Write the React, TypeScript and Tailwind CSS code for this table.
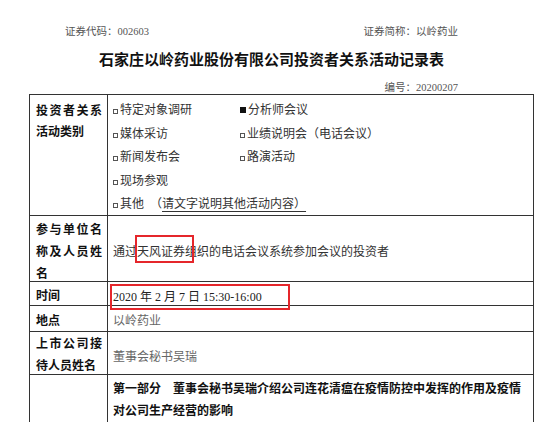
import React from "react";

const serif = { fontFamily: '"Liberation Serif", "Noto Sans CJK SC", serif' };

function Box({ filled = false }: { filled?: boolean }) {
  return filled ? (
    <span className="inline-block w-[6px] h-[6px] bg-[#111] mr-[2px] align-[1px]" />
  ) : (
    <span className="inline-block w-[5px] h-[5px] border border-[#555] mr-[2px] align-[0px]" />
  );
}

export default function App() {
  return (
    <div className="w-[550px] h-[422px] overflow-hidden bg-white relative">
      <div
        className="flex justify-between w-[458px] pl-[65px] pt-[25px] text-[10.5px] leading-[14px] text-[#555]"
        style={serif}
      >
        <span>证券代码：002603</span>
        <span>证券简称：以岭药业</span>
      </div>
      <div className="pl-[99px] pt-[10px] text-[15px] leading-[20px] font-bold text-[#111] font-['Noto_Sans_CJK_SC',sans-serif]">
        石家庄以岭药业股份有限公司投资者关系活动记录表
      </div>
      <div
        className="flex justify-end w-[458px] pt-[12px] text-[10.5px] leading-[14px] text-[#555]"
        style={serif}
      >
        <span>编号：20200207</span>
      </div>
      <div className="ml-[29px] mt-[-1px] w-[505px] border border-[#333] border-b-0">
        {/* Row 1 */}
        <div className="flex h-[121px] border-b border-[#333]">
          <div className="w-[78px] border-r border-[#333] pl-[6px] pt-[4px] text-[12px] leading-[21px] font-bold text-[#111] font-['Noto_Sans_CJK_SC',sans-serif]">
            <div className="tracking-[1.5px]">投资者关系</div>
            <div>活动类别</div>
          </div>
          <div
            className="flex-1 pl-[5px] pt-[4px] text-[12px] leading-[23.5px] text-[#333]"
            style={serif}
          >
            <div className="grid grid-cols-[127px_1fr]">
              <div><Box />特定对象调研</div>
              <div><Box filled />分析师会议</div>
              <div><Box />媒体采访</div>
              <div><Box />业绩说明会（电话会议）</div>
              <div><Box />新闻发布会</div>
              <div><Box />路演活动</div>
              <div><Box />现场参观</div>
              <div />
            </div>
            <div>
              <Box />其他 &nbsp;（<span className="underline underline-offset-[3px] decoration-[#333] pr-[6px]">请文字说明其他活动内容）</span>
            </div>
          </div>
        </div>
        {/* Row 2 */}
        <div className="relative flex h-[66px] border-b border-[#333]">
          <div className="w-[78px] border-r border-[#333] pl-[6px] pt-[2px] text-[12px] leading-[22px] font-bold text-[#111] font-['Noto_Sans_CJK_SC',sans-serif]">
            <div className="tracking-[1.5px]">参与单位名</div>
            <div className="tracking-[1.5px]">称及人员姓</div>
            <div>名</div>
          </div>
          <div
            className="flex-1 pl-[5px] pt-[25px] text-[12px] leading-[22px] text-[#333]"
            style={serif}
          >
            通过天风证券组织的电话会议系统参加会议的投资者
          </div>
          <div className="absolute left-[105px] top-[19px] w-[59px] h-[28px] border-2 border-[#e5262b]" />
        </div>
        {/* Row 3 */}
        <div className="relative flex h-[24px] border-b border-[#333]">
          <div className="w-[78px] border-r border-[#333] pl-[6px] pt-[2px] text-[12px] leading-[22px] font-bold text-[#111] font-['Noto_Sans_CJK_SC',sans-serif]">
            时间
          </div>
          <div
            className="flex-1 pl-[5px] pt-[4px] text-[12px] leading-[22px] text-[#222]"
            style={serif}
          >
            2020 年 2 月 7 日 15:30-16:00
          </div>
          <div className="absolute z-10 left-[80px] top-[2px] w-[180px] h-[26px] border-2 border-[#e5262b]" />
        </div>
        {/* Row 4 */}
        <div className="flex h-[26px] border-b border-[#333]">
          <div className="w-[78px] border-r border-[#333] pl-[6px] pt-[3px] text-[12px] leading-[22px] font-bold text-[#111] font-['Noto_Sans_CJK_SC',sans-serif]">
            地点
          </div>
          <div
            className="flex-1 pl-[5px] pt-[4px] text-[12px] leading-[22px] text-[#666]"
            style={serif}
          >
            以岭药业
          </div>
        </div>
        {/* Row 5 */}
        <div className="flex h-[43px] border-b border-[#333]">
          <div className="w-[78px] border-r border-[#333] pl-[6px] pt-[0px] text-[12px] leading-[22px] font-bold text-[#111] font-['Noto_Sans_CJK_SC',sans-serif]">
            <div className="tracking-[1.5px]">上市公司接</div>
            <div>待人员姓名</div>
          </div>
          <div
            className="flex-1 pl-[5px] pt-[14px] text-[12px] leading-[22px] text-[#666]"
            style={serif}
          >
            董事会秘书吴瑞
          </div>
        </div>
        {/* Row 6 */}
        <div className="flex h-[80px]">
          <div className="w-[78px] border-r border-[#333]" />
          <div className="flex-1 pl-[5px] pr-[2px] pt-[2px] text-[12px] leading-[22px] font-bold text-[#111] font-['Noto_Sans_CJK_SC',sans-serif]">
            第一部分　董事会秘书吴瑞介绍公司连花清瘟在疫情防控中发挥的作用及疫情对公司生产经营的影响
          </div>
        </div>
      </div>
    </div>
  );
}
